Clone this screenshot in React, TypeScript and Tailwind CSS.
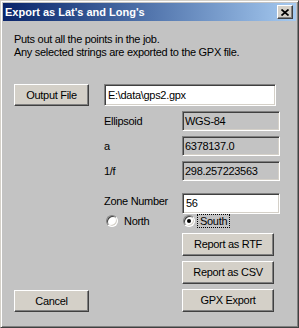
import React from "react";

const btn =
  "flex items-center justify-center bg-[#d4d0c8] border border-t-white border-l-white border-b-[#404040] border-r-[#404040] shadow-[inset_-1px_-1px_#808080]";
const sunken =
  "border border-t-[#808080] border-l-[#808080] border-b-white border-r-white shadow-[inset_1px_1px_#404040,inset_-1px_-1px_#d4d0c8]";

function Radio({ checked }: { checked?: boolean }) {
  return (
    <div
      className={
        "w-[12px] h-[12px] rounded-full bg-white flex items-center justify-center " +
        "border border-t-[#808080] border-l-[#808080] border-b-white border-r-white shadow-[inset_1px_1px_#404040,inset_-1px_-1px_#d4d0c8]"
      }
    >
      {checked && <div className="w-[4px] h-[4px] rounded-full bg-black" />}
    </div>
  );
}

function FieldRow({ label, value }: { label: string; value: string }) {
  return (
    <div className="flex items-center h-[20px]">
      <div className="w-[78px]">{label}</div>
      <div className={"w-[98px] h-[20px] flex items-center pl-[2px] bg-[#c3c3c3] " + sunken}>
        {value}
      </div>
    </div>
  );
}

export default function App() {
  return (
    <div className="w-[299px] h-[328px] bg-[#c3c3c3] border border-t-[#d4d0c8] border-l-[#d4d0c8] border-b-[#404040] border-r-[#404040] shadow-[inset_1px_1px_#ffffff,inset_-1px_-1px_#808080] p-[2px] flex flex-col font-['Liberation_Sans',Arial,sans-serif] text-[11px] text-black leading-[13px]">
      {/* Title bar */}
      <div className="h-[18px] flex items-center justify-between pl-[2px] pr-[3px] bg-gradient-to-r from-[#0a246a] to-[#a6caf0]">
        <div className="text-white font-bold text-[11px]">Export as Lat's and Long's</div>
        <div className={"w-[16px] h-[14px] " + btn}>
          <svg width="8" height="7" viewBox="0 0 8 7">
            <path d="M0.5 0.5 L7.5 6.5 M7.5 0.5 L0.5 6.5" stroke="black" strokeWidth="1.7" fill="none" />
          </svg>
        </div>
      </div>

      {/* Body */}
      <div className="flex-1 flex flex-col pl-[11px] pt-[12px] tracking-[-0.3px]">
        <div>Puts out all the points in the job.</div>
        <div>Any selected strings are exported to the GPX file.</div>

        <div className="flex mt-[25px]">
          <div className={"w-[75px] h-[22px] " + btn}>Output File</div>
          <div className={"ml-[15px] w-[172px] h-[22px] bg-white flex items-center pl-[3px] " + sunken}>
            E:\data\gps2.gpx
          </div>
        </div>

        <div className="flex">
          <div className="w-[75px] flex flex-col justify-end">
            <div className={"w-[75px] h-[22px] " + btn}>Cancel</div>
          </div>
          <div className="ml-[15px] flex flex-col">
            <div className="mt-[5px] flex flex-col gap-[5px]">
              <FieldRow label="Ellipsoid" value="WGS-84" />
              <FieldRow label="a" value="6378137.0" />
              <FieldRow label="1/f" value="298.257223563" />
            </div>
            <div className="mt-[12px] flex items-center h-[21px]">
              <div className="w-[78px] -mt-[4px]">Zone Number</div>
              <div className={"w-[98px] h-[21px] bg-white flex items-center pl-[3px] " + sunken}>56</div>
            </div>
            <div className="flex items-center h-[14px]">
              <div className="w-[79px] flex items-center pl-[2px]">
                <Radio />
                <span className="ml-[6px]">North</span>
              </div>
              <div className="flex items-center">
                <Radio checked />
                <span className="ml-[2px] border border-dotted border-black px-[2px] leading-[12px]">South</span>
              </div>
            </div>
            <div className="ml-[78px] flex flex-col gap-[5px] mt-[5px]">
              <div className={"w-[92px] h-[23px] " + btn}>Report as RTF</div>
              <div className={"w-[92px] h-[23px] " + btn}>Report as CSV</div>
              <div className={"w-[92px] h-[23px] " + btn}>GPX Export</div>
            </div>
          </div>
        </div>
      </div>
    </div>
  );
}
